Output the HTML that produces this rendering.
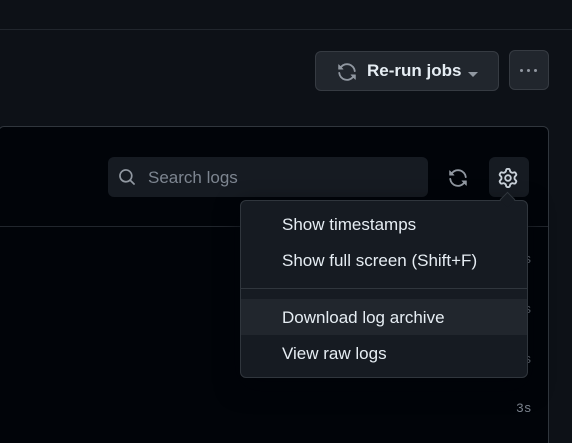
<!DOCTYPE html>
<html style="width:572px;height:443px;overflow:hidden"><head><style>
*{margin:0;padding:0;box-sizing:border-box}
body{width:572px;height:443px;background:#0d1117;font-family:"Liberation Sans",sans-serif;position:relative;overflow:hidden;color:#e6edf3}
.a{position:absolute}
</style></head><body>
<div class="a" style="left:0;top:29px;width:572px;height:1px;background:#21262d"></div>
<div class="a" style="left:315px;top:51px;width:184px;height:40px;background:#21262d;border:1px solid #363b42;border-radius:6px"></div>
<svg class="a" style="left:337px;top:62px" width="20" height="20" viewBox="0 0 16 16" fill="#9198a1"><path d="M1.705 8.005a.75.75 0 0 1 .834.656 5.5 5.5 0 0 0 9.592 2.97l-1.204-1.204a.25.25 0 0 1 .177-.427h3.646a.25.25 0 0 1 .25.25v3.646a.25.25 0 0 1-.427.177l-1.38-1.38A7.002 7.002 0 0 1 1.050 8.840a.75.75 0 0 1 .656-.834ZM8 2.5a5.487 5.487 0 0 0-4.131 1.869l1.204 1.204A.25.25 0 0 1 4.896 6H1.25A.25.25 0 0 1 1 5.75V2.104a.25.25 0 0 1 .427-.177l1.38 1.380A7.002 7.002 0 0 1 14.950 7.160a.75.75 0 0 1-1.490.178A5.5 5.5 0 0 0 8 2.5Z"/></svg>
<div class="a" style="left:367px;top:61px;font-size:17px;font-weight:bold;color:#e6edf3">Re-run jobs</div>
<div class="a" style="left:468px;top:72px;width:0;height:0;border-left:5px solid transparent;border-right:5px solid transparent;border-top:5px solid #9198a1"></div>
<div class="a" style="left:509px;top:50px;width:40px;height:40px;background:#21262d;border:1px solid #363b42;border-radius:6px"></div>
<div class="a" style="left:520px;top:69px;width:3px;height:3px;background:#9198a1;border-radius:50%;box-shadow:7px 0 #9198a1,14px 0 #9198a1"></div>
<div class="a" style="left:-2px;top:126px;width:551px;height:330px;background:#010409;border:1px solid #30363d;border-radius:6px"></div>
<div class="a" style="left:0;top:226px;width:548px;height:1px;background:#21262d"></div>
<div class="a" style="left:108px;top:157px;width:320px;height:40px;background:#161b22;border-radius:6px"></div>
<svg class="a" style="left:118px;top:168px" width="18" height="18" viewBox="0 0 16 16" fill="#9198a1"><path d="M10.68 11.74a6 6 0 0 1-7.922-8.982 6 6 0 0 1 8.982 7.922l3.04 3.04a.749.749 0 1 1-1.06 1.06ZM11.5 7a4.499 4.499 0 1 0-8.997 0A4.499 4.499 0 0 0 11.5 7Z"/></svg>
<div class="a" style="left:148px;top:168px;font-size:17px;color:#7d8590">Search logs</div>
<svg class="a" style="left:448px;top:168px" width="20" height="20" viewBox="0 0 16 16" fill="#9198a1"><path d="M1.705 8.005a.75.75 0 0 1 .834.656 5.5 5.5 0 0 0 9.592 2.97l-1.204-1.204a.25.25 0 0 1 .177-.427h3.646a.25.25 0 0 1 .25.25v3.646a.25.25 0 0 1-.427.177l-1.38-1.38A7.002 7.002 0 0 1 1.050 8.840a.75.75 0 0 1 .656-.834ZM8 2.5a5.487 5.487 0 0 0-4.131 1.869l1.204 1.204A.25.25 0 0 1 4.896 6H1.25A.25.25 0 0 1 1 5.75V2.104a.25.25 0 0 1 .427-.177l1.38 1.380A7.002 7.002 0 0 1 14.950 7.160a.75.75 0 0 1-1.490.178A5.5 5.5 0 0 0 8 2.5Z"/></svg>
<div class="a" style="left:489px;top:157px;width:40px;height:40px;background:#161b22;border-radius:6px"></div>
<svg class="a" style="left:498px;top:168px" width="20" height="20" viewBox="0 0 16 16" fill="#c9d1d9"><path d="M8 0a8.2 8.2 0 0 1 .701.031C9.444.095 9.99.645 10.16 1.29l.288 1.107c.018.066.079.158.212.224.231.114.454.243.668.386.123.082.233.09.299.071l1.103-.303c.644-.176 1.392.021 1.82.63.27.385.506.792.704 1.218.315.675.111 1.422-.364 1.891l-.814.806c-.049.048-.098.147-.088.294.016.257.016.515 0 .772-.01.147.038.246.088.294l.814.806c.475.469.679 1.216.364 1.891a7.977 7.977 0 0 1-.704 1.217c-.428.61-1.176.807-1.82.63l-1.102-.302c-.067-.019-.177-.011-.3.071a5.909 5.909 0 0 1-.668.386c-.133.066-.194.158-.211.224l-.29 1.106c-.168.646-.715 1.196-1.458 1.26a8.006 8.006 0 0 1-1.402 0c-.743-.064-1.289-.614-1.458-1.26l-.289-1.106c-.018-.066-.079-.158-.212-.224a5.738 5.738 0 0 1-.668-.386c-.123-.082-.233-.09-.299-.071l-1.103.303c-.644.176-1.392-.021-1.820-.63a8.12 8.12 0 0 1-.704-1.218c-.315-.675-.111-1.422.363-1.891l.815-.806c.05-.048.098-.147.088-.294a6.214 6.214 0 0 1 0-.772c.01-.147-.038-.246-.088-.294l-.815-.806C.635 6.045.431 5.298.746 4.623a7.92 7.92 0 0 1 .704-1.217c.428-.61 1.176-.807 1.820-.63l1.102.302c.067.019.177.011.3-.071.214-.143.437-.272.668-.386.133-.066.194-.158.211-.224l.29-1.106C6.009.645 6.556.095 7.299.03 7.53.01 7.764 0 8 0Zm-.571 1.525c-.036.003-.108.036-.137.146l-.289 1.105c-.147.561-.549.967-.998 1.189-.173.086-.34.183-.5.29-.417.278-.97.423-1.529.27l-1.103-.303c-.109-.03-.175.016-.195.045-.22.312-.412.644-.573.99-.014.031-.021.11.059.19l.815.806c.411.406.562.957.53 1.456a4.709 4.709 0 0 0 0 .582c.032.499-.119 1.05-.53 1.456l-.815.806c-.081.08-.073.159-.059.19.162.346.353.677.573.989.02.03.085.076.195.046l1.102-.303c.56-.153 1.113-.008 1.53.27.161.107.328.204.501.29.447.222.85.629.997 1.189l.289 1.105c.029.109.101.143.137.146a6.6 6.6 0 0 0 1.142 0c.036-.003.108-.036.137-.146l.289-1.105c.147-.561.549-.967.998-1.189.173-.086.34-.183.5-.29.417-.278.97-.423 1.529-.27l1.103.303c.109.029.175-.016.195-.045.22-.313.411-.644.573-.99.014-.031.021-.11-.059-.19l-.815-.806c-.411-.406-.562-.957-.53-1.456a4.709 4.709 0 0 0 0-.582c-.032-.499.119-1.05.53-1.456l.815-.806c.081-.08.073-.159.059-.19a6.464 6.464 0 0 0-.573-.989c-.02-.03-.085-.076-.195-.046l-1.102.303c-.56.153-1.113.008-1.53-.27a4.44 4.44 0 0 0-.501-.29c-.447-.222-.85-.629-.997-1.189l-.289-1.105c-.029-.11-.101-.143-.137-.146a6.6 6.6 0 0 0-1.142 0ZM11 8a3 3 0 1 1-6 0 3 3 0 0 1 6 0ZM9.5 8a1.5 1.5 0 1 0-3.001.001A1.5 1.5 0 0 0 9.5 8Z"/></svg>
<div class="a" style="left:516px;top:252px;font:13px 'Liberation Mono',monospace;color:#7d8590">3s</div>
<div class="a" style="left:516px;top:302px;font:13px 'Liberation Mono',monospace;color:#7d8590">3s</div>
<div class="a" style="left:516px;top:352px;font:13px 'Liberation Mono',monospace;color:#7d8590">3s</div>
<div class="a" style="left:516px;top:401px;font:13px 'Liberation Mono',monospace;color:#7d8590">3s</div>
<div class="a" style="left:240px;top:200px;width:288px;height:178px;background:#161b22;border:1px solid #30363d;border-radius:6px;box-shadow:0 8px 24px rgba(1,4,9,.8);overflow:hidden">
  <div class="a" style="left:41px;top:14px;font-size:17px;color:#e6edf3">Show timestamps</div>
  <div class="a" style="left:41px;top:50px;font-size:17px;color:#e6edf3">Show full screen (Shift+F)</div>
  <div class="a" style="left:0;top:87px;width:100%;height:1px;background:#30363d"></div>
  <div class="a" style="left:0;top:98px;width:100%;height:36px;background:#21262d"></div>
  <div class="a" style="left:41px;top:107px;font-size:17px;color:#e6edf3">Download log archive</div>
  <div class="a" style="left:41px;top:143px;font-size:17px;color:#e6edf3">View raw logs</div>
</div>
<div class="a" style="left:502px;top:194px;width:11px;height:11px;background:#161b22;border-left:1px solid #30363d;border-top:1px solid #30363d;transform:rotate(45deg)"></div>
</body></html>
